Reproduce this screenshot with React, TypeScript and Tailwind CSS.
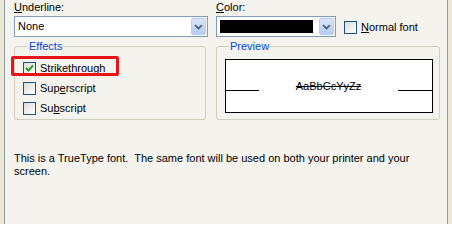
import React from "react";

const font = { fontFamily: '"Liberation Sans", Arial, sans-serif' };

function Arrow() {
  return (
    <div className="flex h-[17px] w-[15px] items-center justify-center rounded-[2px] border border-[#b9cbf3] bg-gradient-to-b from-[#dbe6fd] to-[#b7cbf8]">
      <svg width="9" height="6" viewBox="0 0 9 6">
        <path d="M1 1.2 L4.5 4.5 L8 1.2" stroke="#4d6185" strokeWidth="1.8" fill="none" />
      </svg>
    </div>
  );
}

function Check({ checked }: { checked?: boolean }) {
  return (
    <div className="flex h-[13px] w-[13px] shrink-0 items-center justify-center border border-[#1c5180] bg-gradient-to-br from-[#dcdcd7] to-white">
      {checked && (
        <svg width="9" height="9" viewBox="0 0 9 9">
          <path d="M1 4 L3.5 6.5 L8 1.5" stroke="#21a121" strokeWidth="2" fill="none" />
        </svg>
      )}
    </div>
  );
}

function Row({ checked, children }: { checked?: boolean; children: React.ReactNode }) {
  return (
    <div className="flex h-[20px] items-center gap-[4px]">
      <Check checked={checked} />
      <span className="leading-[13px]">{children}</span>
    </div>
  );
}

export default function App() {
  return (
    <div className="h-[224px] w-[452px] overflow-hidden bg-[#ece9d8] text-[11px] text-black" style={font}>
      <div className="relative ml-[4px] flex h-[224px] w-[444px] flex-col border-x border-[#919b9c] bg-[#f4f3ee] pl-[9px]">
        {/* labels + selects */}
        <div className="flex gap-[8px] pt-[1px]">
          <div className="flex w-[194px] flex-col">
            <span className="h-[15px] leading-[13px]">
              <u>U</u>nderline:
            </span>
            <div className="flex h-[21px] items-center justify-between border border-[#7f9db9] bg-white pl-[3px] pr-[1px]">
              <span>None</span>
              <Arrow />
            </div>
          </div>
          <div className="flex flex-col">
            <span className="h-[15px] leading-[13px]">
              <u>C</u>olor:
            </span>
            <div className="flex h-[21px] w-[120px] items-center justify-between border border-[#7f9db9] bg-white pl-[3px] pr-[1px]">
              <div className="h-[13px] w-[93px] bg-black" />
              <Arrow />
            </div>
          </div>
          <div className="flex items-center gap-[4px] self-end pb-[3px]">
            <Check />
            <span className="leading-[13px]">
              <u>N</u>ormal font
            </span>
          </div>
        </div>

        {/* group boxes */}
        <div className="mt-[3px] flex gap-[10px]">
          <fieldset className="h-[80px] w-[192px] rounded-[3px] border border-[#d0d0bf] pl-[8px]">
            <legend className="ml-[5px] px-[1px] leading-[13px] text-[#0046d5]">Effects</legend>
            <div className="pt-[5px]">
              <Row checked>Strikethrough</Row>
              <Row>
                Sup<u>e</u>rscript
              </Row>
              <Row>
                Su<u>b</u>script
              </Row>
            </div>
          </fieldset>
          <fieldset className="h-[80px] w-[224px] rounded-[3px] border border-[#d0d0bf] pl-[8px]">
            <legend className="ml-[4px] px-[1px] leading-[13px] text-[#0046d5]">Preview</legend>
            <div className="mt-[6px] flex h-[54px] w-[208px] items-center border border-black bg-white">
              <div className="mt-[8px] h-px w-[33px] bg-black" />
              <span className="flex-1 text-center leading-[13px] line-through">AaBbCcYyZz</span>
              <div className="mt-[8px] h-px w-[34px] bg-black" />
            </div>
          </fieldset>
        </div>

        <p className="mt-[32px] w-[420px] whitespace-pre-wrap leading-[13px]">
          {"This is a TrueType font.  The same font will be used on both your printer and your screen."}
        </p>

        {/* selection highlight */}
        <div className="absolute left-[6px] top-[56px] h-[20px] w-[108px] rounded-[2px] border-[3px] border-[#e8141c]" />
      </div>
    </div>
  );
}
